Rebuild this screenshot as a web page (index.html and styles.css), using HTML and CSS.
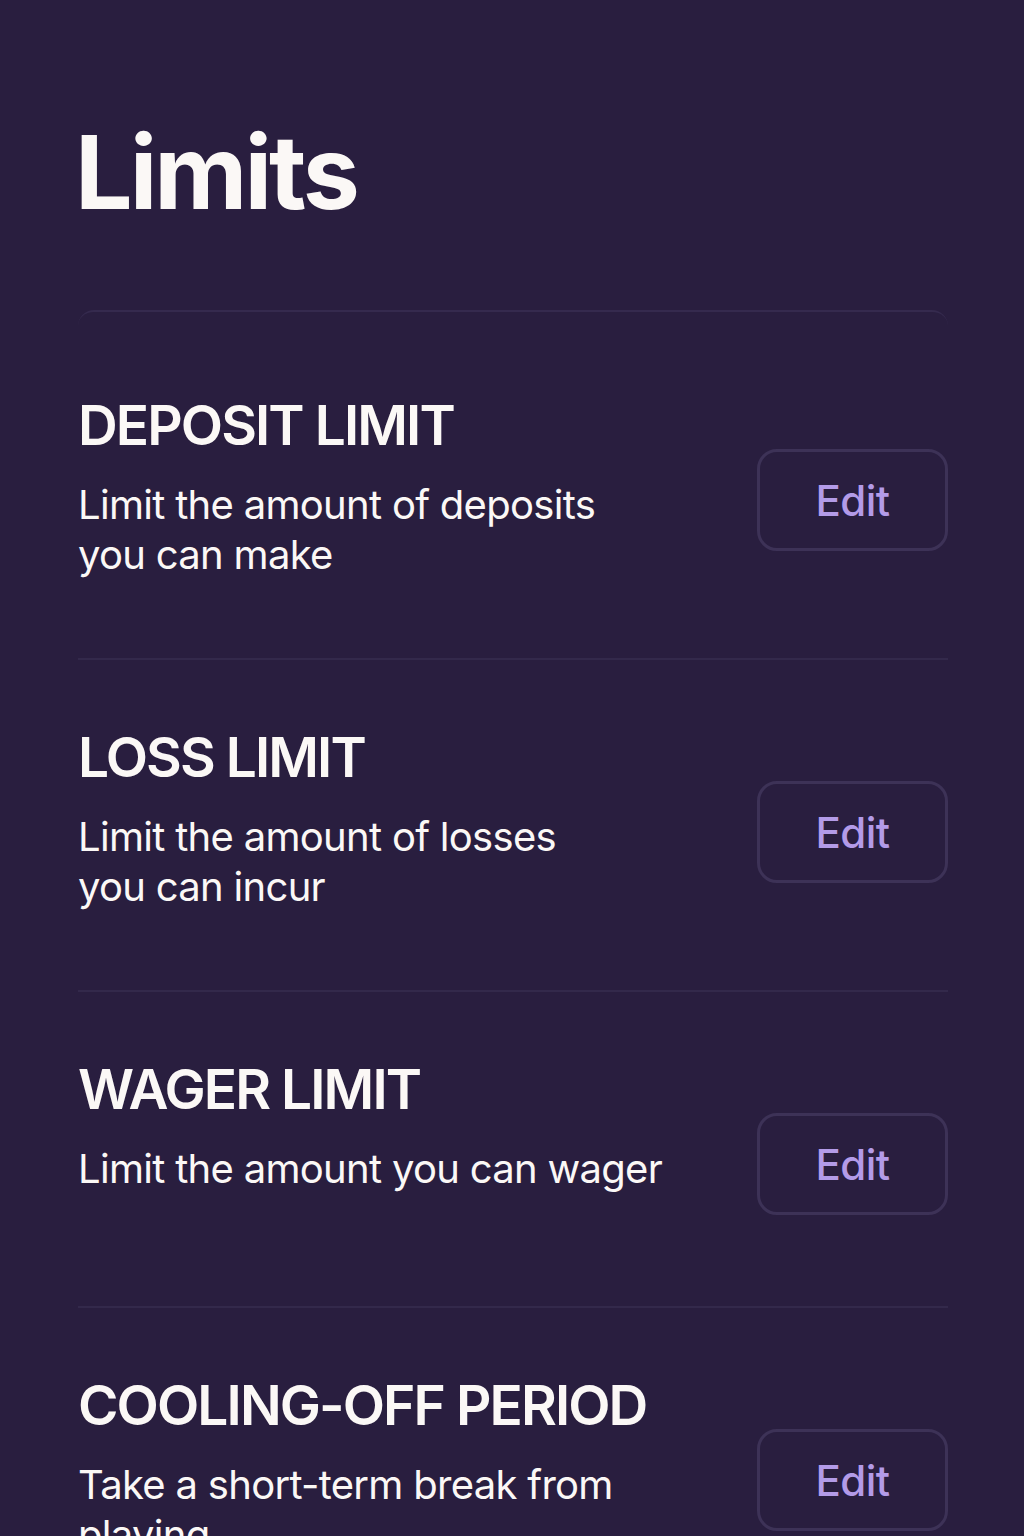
FILE: index.html
```html
<!DOCTYPE html>
<html lang="en">
  <head>
    <meta charset="UTF-8" />
    <meta name="viewport" content="width=device-width, initial-scale=1.0" />
    <title>Limits</title>
    <link rel="stylesheet" href="styles.css">
  </head>
  <body>
    <div class="page">
      <h1 class="page__title">Limits</h1>

      <div class="limits">
        <div class="limit">
          <div class="limit__text">
            <h2>DEPOSIT LIMIT</h2>
            <p>Limit the amount of deposits<br />you can make</p>
          </div>
          <button class="btn">Edit</button>
        </div>

        <div class="limit">
          <div class="limit__text">
            <h2>LOSS LIMIT</h2>
            <p>Limit the amount of losses<br />you can incur</p>
          </div>
          <button class="btn">Edit</button>
        </div>

        <div class="limit">
          <div class="limit__text">
            <h2>WAGER LIMIT</h2>
            <p>Limit the amount you can wager</p>
          </div>
          <button class="btn">Edit</button>
        </div>

        <div class="limit">
          <div class="limit__text">
            <h2>COOLING-OFF PERIOD</h2>
            <p>Take a short-term break from<br />playing</p>
          </div>
          <button class="btn">Edit</button>
        </div>
      </div>
    </div>
  </body>
</html>
```

FILE: styles.css
```css
body {
  margin: 0;
  background-color: #291e3f;
  color: #fbf8f6;
  font-family: Inter, "Noto Sans", sans-serif;
}

.page {
  padding: 0 76px 0 78px;
}

.page__title {
  margin: 121px 0 87px -3px;
  font-size: 102px;
  line-height: 102px;
  font-weight: 700;
  letter-spacing: -3px;
}

.limits {
  padding-top: 16px;
  border-top: 2px solid #352a4e;
  border-radius: 16px 16px 0 0;
}

.limit {
  display: flex;
  justify-content: space-between;
  align-items: flex-start;
  box-sizing: border-box;
  min-height: 316px;
  padding: 64px 0 78px;
  border-bottom: 2px solid #33294b;
}

.limits .limit:first-child {
  min-height: 300px;
}

.limit h2 {
  margin: 0;
  font-size: 55px;
  line-height: 66px;
  font-weight: 600;
  letter-spacing: -1.9px;
}

.limit p {
  margin: 22px 0 0;
  font-size: 40px;
  line-height: 50px;
  font-weight: 400;
  letter-spacing: -0.7px;
}

.btn {
  margin-top: 57px;
  width: 191px;
  height: 102px;
  flex-shrink: 0;
  background-color: transparent;
  border: 3px solid #3d3257;
  border-radius: 20px;
  color: #b39be8;
  font-family: Inter, "Noto Sans", sans-serif;
  font-size: 42px;
  font-weight: 500;
  letter-spacing: -0.5px;
  cursor: pointer;
}

.btn:hover {
  background-color: #33284b;
}
```
